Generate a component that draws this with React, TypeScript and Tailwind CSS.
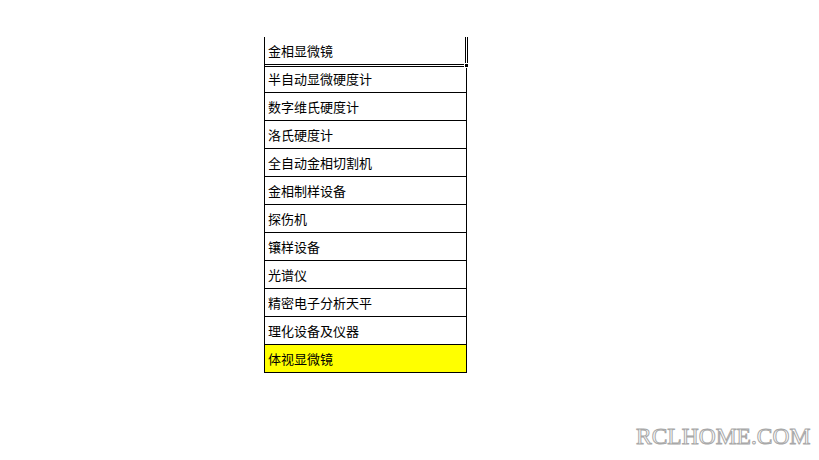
const items = [
  '半自动显微硬度计',
  '数字维氏硬度计',
  '洛氏硬度计',
  '全自动金相切割机',
  '金相制样设备',
  '探伤机',
  '镶样设备',
  '光谱仪',
  '精密电子分析天平',
  '理化设备及仪器',
];

export default function App() {
  return (
    <div className="relative w-[819px] h-[460px] bg-white overflow-hidden font-['Noto_Sans_CJK_SC','Noto_Sans',sans-serif] text-[13px] text-black">
      <div className="pl-[264px] pt-[37px]">
        {/* selected cell with double edge */}
        <div className="relative w-[204px] h-[30px] border-l border-r-[3px] border-b-[3px] border-black border-double border-l-solid pl-[3px] flex items-center leading-none">
          金相显微镜
          <span className="absolute right-[-4px] bottom-[-4px] w-[5px] h-[5px] bg-black border border-white" />
        </div>
        <div className="w-[203px] border-l border-r border-black -mt-[2px]">
          {items.map((t) => (
            <div key={t} className="h-[28px] border-b border-black pl-[3px] flex items-center leading-none">
              {t}
            </div>
          ))}
          <div className="h-[28px] border-b border-black bg-[#ffff00] pl-[3px] flex items-center leading-none">
            体视显微镜
          </div>
        </div>
      </div>
      <div className="absolute left-[636px] top-[419px] font-['Liberation_Serif',serif] text-[23.5px] text-white [-webkit-text-stroke:1px_#a8a8a8]">
        RCLHOME.COM
      </div>
    </div>
  );
}
